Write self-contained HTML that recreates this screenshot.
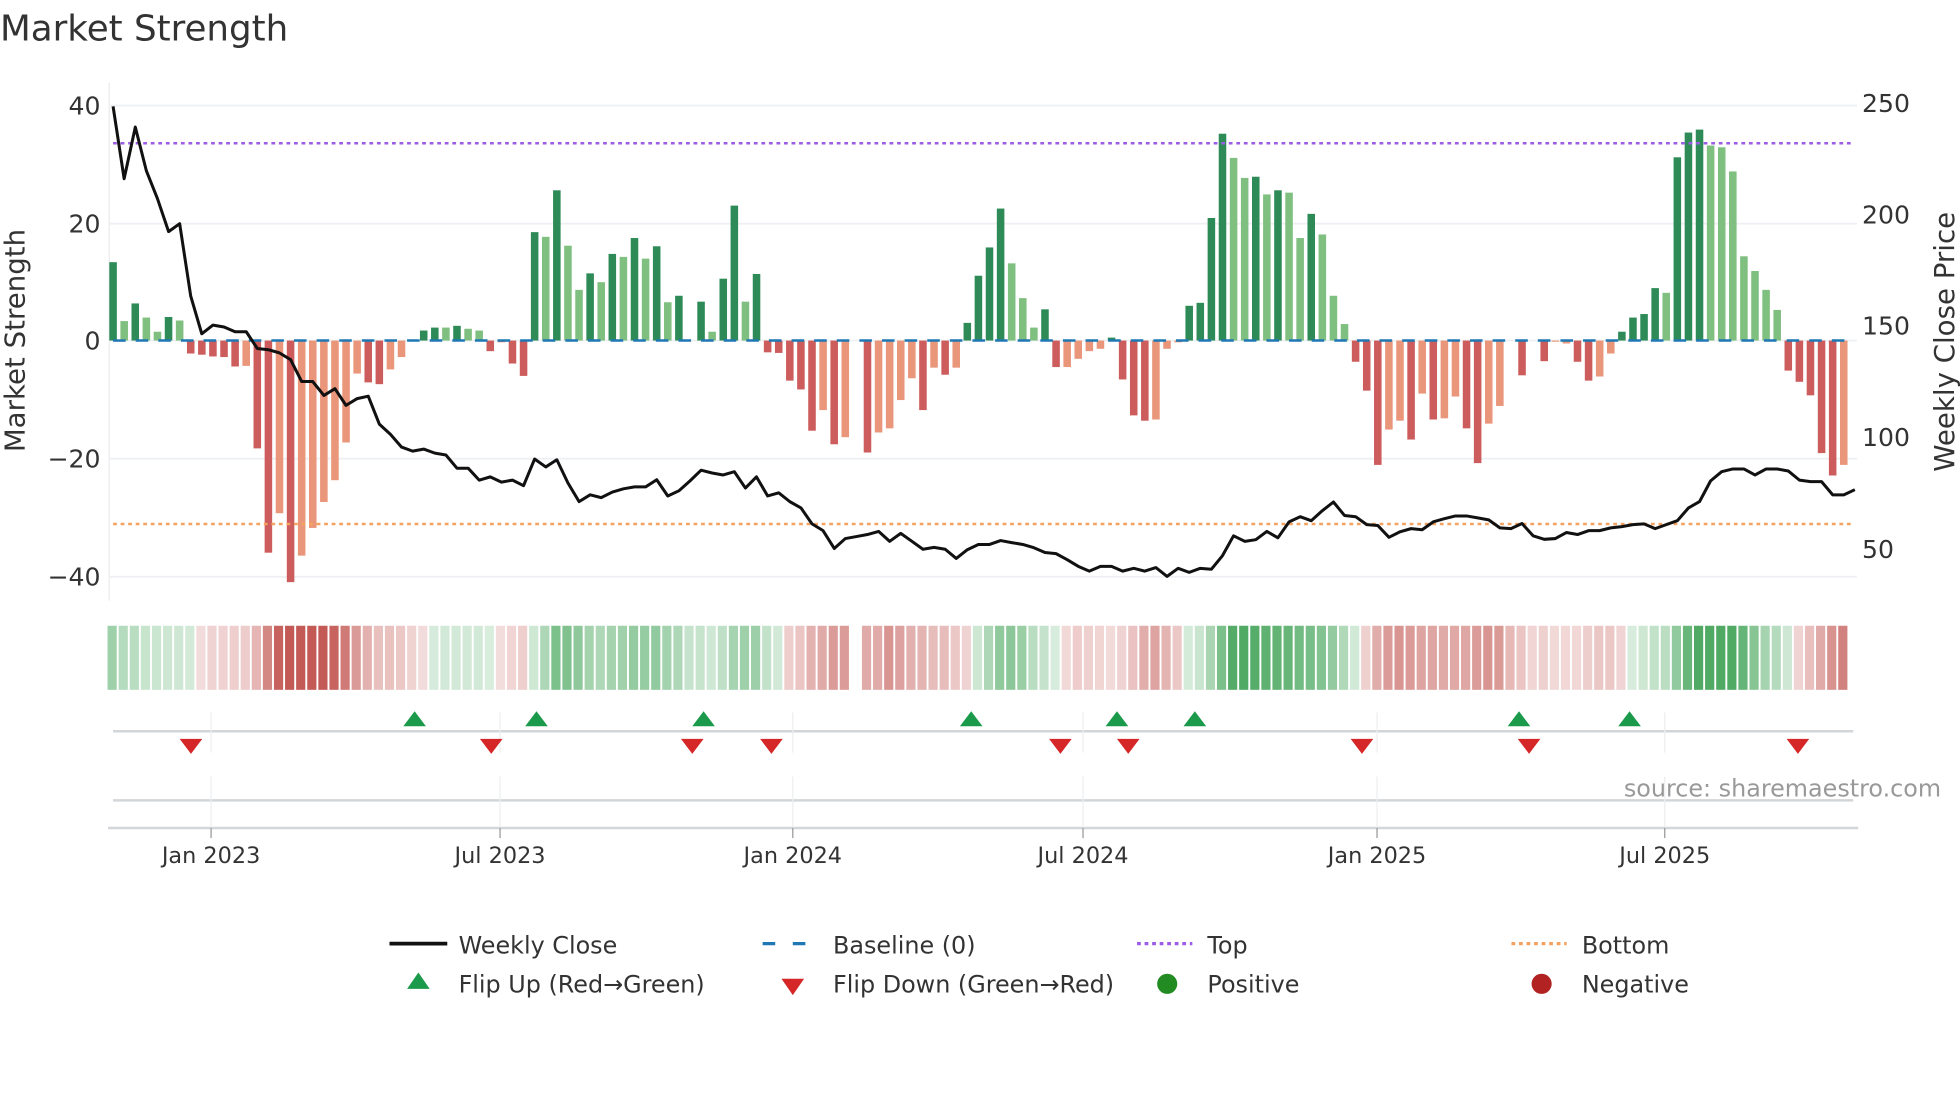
<!DOCTYPE html>
<html><head><meta charset="utf-8"><style>
html,body{margin:0;padding:0;background:#fff;width:1960px;height:1102px;overflow:hidden}
svg{display:block}
text{font-family:"DejaVu Sans","Liberation Sans",sans-serif}
</style></head><body>
<svg id="s" width="1960" height="1102" viewBox="0 0 1560 877" xmlns="http://www.w3.org/2000/svg">
<text x="0" y="32" font-size="28.4" fill="#333">Market Strength</text>
<g id="grid"></g>
<g id="bars"></g>
<g id="line"></g>
<g id="strip"></g>
<g id="marks"></g>
<text x="13" y="271" font-size="22" fill="#333" text-anchor="middle" transform="rotate(-90 13 271)" dominant-baseline="middle">Market Strength</text>
<text x="1549" y="272" font-size="22" fill="#333" text-anchor="middle" transform="rotate(-90 1549 272)" dominant-baseline="middle">Weekly Close Price</text>
<text x="1545" y="634" font-size="19" fill="#999" text-anchor="end">source: sharemaestro.com</text>
<g font-size="19" fill="#333">
<line x1="310" y1="751" x2="356" y2="751" stroke="#111" stroke-width="3"/>
<text x="365" y="759">Weekly Close</text>
<line x1="607" y1="751" x2="651" y2="751" stroke="#1f77b4" stroke-width="2.5" stroke-dasharray="10 14"/>
<text x="663" y="759">Baseline (0)</text>
<line x1="905" y1="751" x2="949" y2="751" stroke="#9b5de5" stroke-width="2.5" stroke-dasharray="3 3"/>
<text x="961" y="759">Top</text>
<line x1="1203" y1="751" x2="1247" y2="751" stroke="#f4a261" stroke-width="2.5" stroke-dasharray="3 3"/>
<text x="1259" y="759">Bottom</text>
<polygon points="333,774 342,787 324,787" fill="#1a9a4a"/>
<text x="365" y="790">Flip Up (Red→Green)</text>
<polygon points="622,779 640,779 631,792" fill="#d62728"/>
<text x="663" y="790">Flip Down (Green→Red)</text>
<circle cx="929" cy="783" r="8" fill="#228b22"/>
<text x="961" y="790">Positive</text>
<circle cx="1227" cy="783" r="8" fill="#b22222"/>
<text x="1259" y="790">Negative</text>
</g>
</svg>
<script>
var NS="http://www.w3.org/2000/svg";
function el(p,t,a){var e=document.createElementNS(NS,t);for(var k in a)e.setAttribute(k,a[k]);document.getElementById(p).appendChild(e);return e;}
var V=[[13.3,'D'],[3.3,'L'],[6.3,'D'],[3.9,'L'],[1.5,'L'],[4,'D'],[3.4,'L'],[-2.2,'R'],[-2.4,'R'],[-2.7,'R'],[-2.8,'R'],[-4.4,'R'],[-4.3,'S'],[-18.3,'R'],[-36,'R'],[-29.3,'S'],[-41,'R'],[-36.5,'S'],[-31.8,'S'],[-27.4,'S'],[-23.7,'S'],[-17.3,'S'],[-5.6,'S'],[-7.1,'R'],[-7.4,'R'],[-4.9,'S'],[-2.8,'S'],[0,'S'],[1.7,'D'],[2.2,'D'],[2.2,'L'],[2.5,'D'],[2,'L'],[1.7,'L'],[-1.8,'R'],[-0.3,'S'],[-3.9,'R'],[-6,'R'],[18.4,'D'],[17.6,'L'],[25.5,'D'],[16.1,'L'],[8.6,'L'],[11.4,'D'],[9.9,'L'],[14.7,'D'],[14.2,'L'],[17.4,'D'],[13.9,'L'],[16,'D'],[6.5,'L'],[7.6,'D'],[0,'L'],[6.6,'D'],[1.5,'L'],[10.5,'D'],[22.9,'D'],[6.6,'L'],[11.3,'D'],[-2,'R'],[-2.1,'R'],[-6.8,'R'],[-8.3,'R'],[-15.3,'R'],[-11.8,'S'],[-17.6,'R'],[-16.4,'S'],[0,'S'],[-19,'R'],[-15.6,'S'],[-14.9,'S'],[-10.1,'S'],[-6.4,'S'],[-11.8,'R'],[-4.6,'S'],[-5.8,'R'],[-4.6,'S'],[3,'D'],[11,'D'],
[15.8,'D'],[22.4,'D'],[13.1,'L'],[7.2,'L'],[2.2,'L'],[5.3,'D'],[-4.5,'R'],[-4.5,'S'],[-3.1,'S'],[-1.8,'S'],[-1.4,'S'],[0.5,'D'],[-6.6,'R'],[-12.7,'R'],[-13.6,'R'],[-13.4,'S'],[-1.4,'S'],[-0.3,'S'],[5.9,'D'],[6.4,'D'],[20.8,'D'],[35.1,'D'],[31,'L'],[27.6,'L'],[27.8,'D'],[24.8,'L'],[25.5,'D'],[25.1,'L'],[17.4,'L'],[21.5,'D'],[18,'L'],[7.6,'L'],[2.8,'L'],[-3.6,'R'],[-8.5,'R'],[-21.1,'R'],[-15.1,'S'],[-13.6,'S'],[-16.8,'R'],[-9,'S'],[-13.4,'R'],[-13.2,'S'],[-9.5,'S'],[-14.9,'R'],[-20.8,'R'],[-14.1,'S'],[-11.1,'S'],[0,'S'],[-5.9,'R'],[0,'S'],[-3.5,'R'],[-0.2,'S'],[-0.5,'S'],[-3.6,'R'],[-6.8,'R'],[-6.1,'S'],[-2.2,'S'],[1.5,'D'],[3.9,'D'],[4.5,'D'],[8.9,'D'],[8.1,'L'],[31.1,'D'],[35.3,'D'],[35.8,'D'],[33.1,'L'],[32.8,'L'],[28.7,'L'],[14.3,'L'],[11.8,'L'],[8.6,'L'],[5.2,'L'],[-5.1,'R'],[-7,'R'],[-9.3,'R'],[-19.1,'R'],[-22.9,'R'],[-21.1,'S']];
var P1=[268,450,320,430,500,583,563,745,840,818,823,835,835,877,880,888,905,960,960,995,978,1020,1003,997,1067,1093,1125,1135,1130,1140,1145,1178,1178,1208,1200,1213,1208,1222,1155,1175,1157,1215,1262,1245,1252,1238,1230,1225,1225,1207,1248,1235,1210,1183,1190,1195,1187,1228,1200,1248,1240,1262,1278,1318,1335,1380,1355,1350,1345,1337,1362,1342,1362,1382,1377,1382,1405,1383,1370];
var P2=[1370,1360,1365,1370,1378,1390,1393,1408,1425,1437,1425,1425,1437,1430,1437,1428,1450,1430,1440,1430,1432,1398,1348,1362,1358,1337,1353,1313,1300,1310,1285,1263,1297,1300,1320,1322,1352,1338,1330,1333,1313,1305,1298,1298,1303,1308,1328,1330,1317,1348,1357,1355,1340,1345,1335,1335,1328,1325,1320,1318,1330,1320,1310,1278,1262,1210,1187,1180,1180,1195,1180,1180,1185,1208,1212,1212,1245,1245,1232];
var P=P1.concat(P2);
var X0=90,DX=8.83,Z=271,U=4.69;
[[84,'40'],[178,'20'],[271,'0'],[365,'−20'],[459,'−40']].forEach(function(g){
 el('grid','line',{x1:87,y1:g[0],x2:1478,y2:g[0],stroke:'#eef0f3','stroke-width':1.5});
 var t=el('grid','text',{x:80,y:g[0]+7,'font-size':20,fill:'#333','text-anchor':'end'});t.textContent=g[1];});
[[82,'250'],[171,'200'],[259,'150'],[348,'100'],[437,'50']].forEach(function(g){
 var t=el('grid','text',{x:1482,y:g[0]+7,'font-size':20,fill:'#333'});t.textContent=g[1];});
el('grid','line',{x1:87,y1:66,x2:87,y2:478,stroke:'#eceef0','stroke-width':1.2});
var C={D:'#2e8b57',L:'#7fbf7f',R:'#cd5c5c',S:'#e9967a'};
V.forEach(function(v,i){var x=X0+i*DX-3,h=Math.abs(v[0])*U;if(h<0.5)return;
 el('bars','rect',{x:x,y:v[0]>0?Z-h:Z,width:6,height:h,fill:C[v[1]]});});
el('bars','line',{x1:90,y1:Z,x2:1476,y2:Z,stroke:'#1f77b4','stroke-width':2,'stroke-dasharray':'10 8'});
el('bars','line',{x1:90,y1:114,x2:1476,y2:114,stroke:'#9b5de5','stroke-width':2,'stroke-dasharray':'3 3'});
el('bars','line',{x1:90,y1:417,x2:1476,y2:417,stroke:'#f4a261','stroke-width':2,'stroke-dasharray':'3 3'});
var pts=P.map(function(y,i){return (X0+i*DX).toFixed(1)+','+((y-857)/3.16+271).toFixed(1);}).join(' ');
el('line','polyline',{points:pts,fill:'none',stroke:'#111','stroke-width':2.4,'stroke-linejoin':'round'});
function mix(a,b,t){return 'rgb('+a.map(function(c,k){return Math.round(c+(b[k]-c)*t)}).join(',')+')';}
V.forEach(function(v,i){
 var s=0,n=0;for(var k=i-2;k<=i;k++){if(k>=0){s+=V[k][0];n++;}}s/=n;
 var t=Math.min(Math.abs(s)/30,1)*0.8+0.2;if(i==67)return;
 var col=s>=0?mix([255,255,255],[80,170,100],t):mix([255,255,255],[195,90,85],t);
 el('strip','rect',{x:X0+i*DX-4.4,y:498,width:7.3,height:51,fill:col});});
el('marks','line',{x1:90,y1:582,x2:1475,y2:582,stroke:'#d3d6d9','stroke-width':2});
el('marks','line',{x1:90,y1:637,x2:1475,y2:637,stroke:'#d3d6d9','stroke-width':2});
el('marks','line',{x1:86,y1:659,x2:1479,y2:659,stroke:'#d3d6d9','stroke-width':2});
[[168,'Jan 2023'],[398,'Jul 2023'],[631,'Jan 2024'],[862,'Jul 2024'],[1096,'Jan 2025'],[1325,'Jul 2025']].forEach(function(d){
 el('marks','line',{x1:d[0],y1:567,x2:d[0],y2:599,stroke:'#eceef0','stroke-width':1});
 el('marks','line',{x1:d[0],y1:618,x2:d[0],y2:658,stroke:'#eceef0','stroke-width':1});
 el('marks','line',{x1:d[0],y1:659,x2:d[0],y2:667,stroke:'#999','stroke-width':1});
 var t=el('marks','text',{x:d[0],y:687,'font-size':17.8,fill:'#333','text-anchor':'middle'});t.textContent=d[1];});
[330,427,560,773,889,951,1209,1297].forEach(function(x){
 el('marks','polygon',{points:x+',566 '+(x+9)+',578 '+(x-9)+',578',fill:'#1a9a4a'});});
[152,391,551,614,844,898,1084,1217,1431].forEach(function(x){
 el('marks','polygon',{points:(x-9)+',588 '+(x+9)+',588 '+x+',600',fill:'#d62728'});});
</script>
</body></html>
